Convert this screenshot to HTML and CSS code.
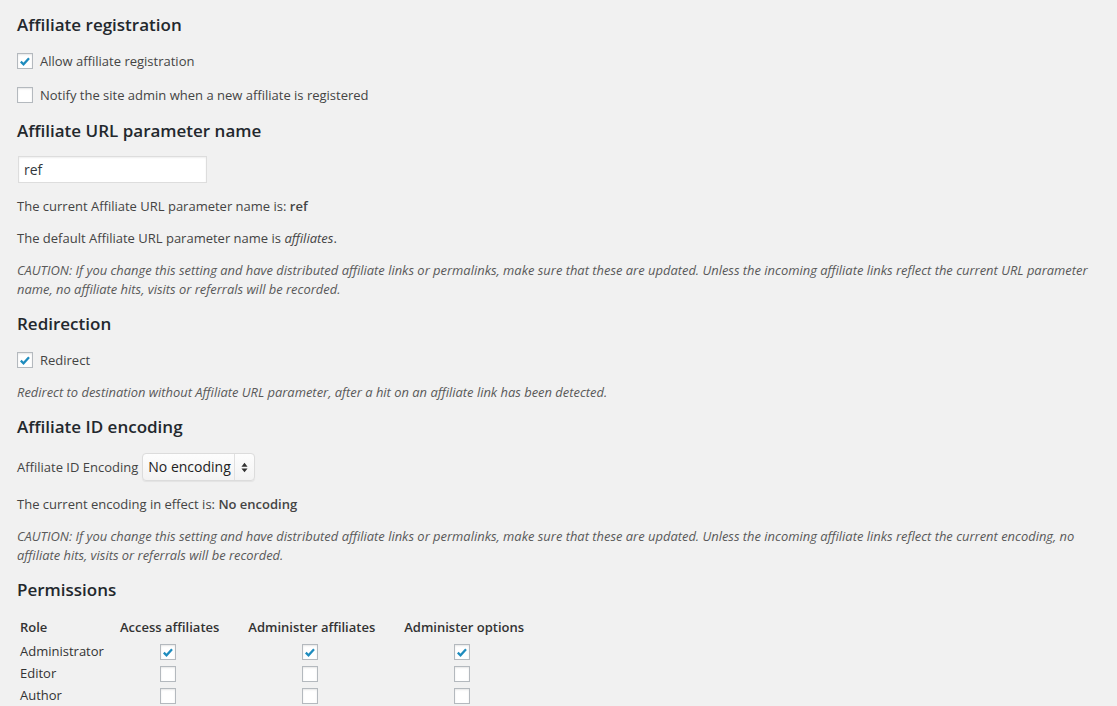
FILE: index.html
```html
<!DOCTYPE html>
<html>
<head>
<meta charset="utf-8">
<link rel="stylesheet" href="styles.css">
</head>
<body>
<div class="wrap">
  <h3 class="h h-first">Affiliate registration</h3>
  <label class="cb-row cb-row-1"><span class="cb checked"><svg viewBox="0 0 16 16"><path d="M3.2 8.2 L6.3 11.2 L12.6 4.4" /></svg></span>Allow affiliate registration</label>
  <label class="cb-row cb-row-2"><span class="cb"></span>Notify the site admin when a new affiliate is registered</label>

  <h3 class="h">Affiliate URL parameter name</h3>
  <div class="input">ref</div>
  <p class="p p-after-input">The current Affiliate URL parameter name is: <b>ref</b></p>
  <p class="p">The default Affiliate URL parameter name is <i>affiliates</i>.</p>
  <p class="p desc">CAUTION: If you change this setting and have distributed affiliate links or permalinks, make sure that these are updated. Unless the incoming affiliate links reflect the current URL parameter name, no affiliate hits, visits or referrals will be recorded.</p>

  <h3 class="h">Redirection</h3>
  <label class="cb-row cb-row-1"><span class="cb checked"><svg viewBox="0 0 16 16"><path d="M3.2 8.2 L6.3 11.2 L12.6 4.4" /></svg></span>Redirect</label>
  <p class="p desc desc-short">Redirect to destination without Affiliate URL parameter, after a hit on an affiliate link has been detected.</p>

  <h3 class="h">Affiliate ID encoding</h3>
  <div class="sel-row">
    <span class="sel-label">Affiliate ID Encoding</span>
    <span class="select"><span class="sel-text">No encoding</span><span class="sel-arrows"><svg viewBox="0 0 8 12"><path d="M4 0.5 L7.5 5 L0.5 5 Z M4 11.5 L7.5 7 L0.5 7 Z"/></svg></span></span>
  </div>
  <p class="p p-after-sel">The current encoding in effect is: <b>No encoding</b></p>
  <p class="p desc">CAUTION: If you change this setting and have distributed affiliate links or permalinks, make sure that these are updated. Unless the incoming affiliate links reflect the current encoding, no affiliate hits, visits or referrals will be recorded.</p>

  <h3 class="h h-perm">Permissions</h3>
  <table class="perm">
    <thead>
      <tr><th class="c-role">Role</th><th class="c-a">Access affiliates</th><th class="c-b">Administer affiliates</th><th class="c-c">Administer options</th></tr>
    </thead>
    <tbody>
      <tr>
        <td class="c-role">Administrator</td>
        <td class="c-a ctr"><span class="cb sm checked"><svg viewBox="0 0 16 16"><path d="M3.2 8.2 L6.3 11.2 L12.6 4.4" /></svg></span></td>
        <td class="c-b ctr"><span class="cb sm checked"><svg viewBox="0 0 16 16"><path d="M3.2 8.2 L6.3 11.2 L12.6 4.4" /></svg></span></td>
        <td class="c-c ctr"><span class="cb sm checked"><svg viewBox="0 0 16 16"><path d="M3.2 8.2 L6.3 11.2 L12.6 4.4" /></svg></span></td>
      </tr>
      <tr>
        <td class="c-role">Editor</td>
        <td class="c-a ctr"><span class="cb sm"></span></td>
        <td class="c-b ctr"><span class="cb sm"></span></td>
        <td class="c-c ctr"><span class="cb sm"></span></td>
      </tr>
      <tr>
        <td class="c-role">Author</td>
        <td class="c-a ctr"><span class="cb sm"></span></td>
        <td class="c-b ctr"><span class="cb sm"></span></td>
        <td class="c-c ctr"><span class="cb sm"></span></td>
      </tr>
    </tbody>
  </table>
</div>
</body>
</html>
```

FILE: styles.css
```css
html, body {
  margin: 0;
  padding: 0;
  background: #f1f1f1;
}
body {
  font-family: "Open Sans", "Liberation Sans", sans-serif;
  font-size: 13px;
  color: #444;
  overflow: hidden;
  height: 706px;
}
.wrap {
  padding-left: 17px;
  padding-right: 20px;
  display: flex;
  flex-direction: column;
  align-items: flex-start;
}
.h {
  font-size: 17px;
  line-height: 22px;
  font-weight: 600;
  color: #23282d;
  margin: 14.5px 0 0 0;
}
.h-first {
  margin-top: 14px;
}
.h-perm {
  margin-top: 13.5px;
}
.cb-row {
  display: flex;
  align-items: center;
  height: 20px;
  line-height: 20px;
  margin-top: 14px;
}
.cb-row-1 {
  margin-top: 15px;
}
.cb {
  box-sizing: border-box;
  width: 16px;
  height: 16px;
  border: 1px solid #b4b9be;
  background: #fff;
  box-shadow: inset 0 1px 2px rgba(0,0,0,0.1);
  display: inline-flex;
  align-items: center;
  justify-content: center;
  margin-right: 7px;
  flex: none;
}
.cb svg {
  width: 15px;
  height: 15px;
}
.cb svg path {
  fill: none;
  stroke: #1e8cbe;
  stroke-width: 2.6;
  stroke-linecap: butt;
  stroke-linejoin: miter;
}
.input {
  box-sizing: border-box;
  width: 189px;
  height: 27px;
  margin: 14px 0 0 1px;
  background: #fff;
  border: 1px solid #ddd;
  box-shadow: inset 0 1px 2px rgba(0,0,0,0.07);
  font-size: 14px;
  line-height: 25px;
  padding-left: 5px;
  color: #32373c;
}
.p {
  margin: 13px 0 0 0;
  line-height: 19px;
}
.p b {
  font-weight: 600;
}
.p-after-input {
  margin-top: 14px;
}
.desc {
  font-style: italic;
  color: #595959;
  font-size: 12.93px;
}
.desc-short {
  margin-top: 12.5px;
}
.sel-row {
  display: flex;
  align-items: center;
  margin-top: 15px;
  height: 28px;
}
.sel-label {
  margin-right: 4px;
}
.select {
  box-sizing: border-box;
  display: inline-flex;
  align-items: center;
  height: 28px;
  width: 113px;
  border: 1px solid #dcdcdc;
  border-radius: 4px;
  background: linear-gradient(#fdfdfd, #f3f3f3);
  box-shadow: 0 1px 1px rgba(0,0,0,0.06);
  font-size: 14px;
  color: #222;
  white-space: nowrap;
}
.sel-text {
  padding-left: 5px;
  width: 92px;
  box-sizing: border-box;
  height: 100%;
  line-height: 26px;
  border-right: 1px solid #e0e0e0;
  white-space: nowrap;
  overflow: hidden;
}
.sel-arrows {
  flex: 1;
  display: flex;
  justify-content: center;
  align-items: center;
}
.sel-arrows svg {
  width: 7px;
  height: 11px;
}
.sel-arrows svg path {
  fill: #333;
}
.p-after-sel {
  margin-top: 14px;
}
.perm {
  margin-top: 15px;
  border-collapse: collapse;
  margin-left: 3px;
}
.perm th, .perm td {
  padding: 0;
  text-align: left;
  font-size: 13px;
}
.perm th {
  font-weight: 600;
  color: #333;
  height: 22px;
  line-height: 22px;
  padding-bottom: 2px;
}
.perm td {
  height: 22px;
  line-height: 22px;
  color: #333;
}
.perm .c-role {
  width: 100px;
}
.perm th.c-a, .perm th.c-b {
  padding-right: 29px;
}
.perm td.c-a, .perm td.c-b {
  padding-right: 33px;
}
.perm td.c-c {
  padding-right: 4px;
}
.perm .ctr {
  text-align: center;
  vertical-align: middle;
}
.perm .cb {
  margin: 0;
  vertical-align: middle;
  width: 16px;
  height: 16px;
}
```
